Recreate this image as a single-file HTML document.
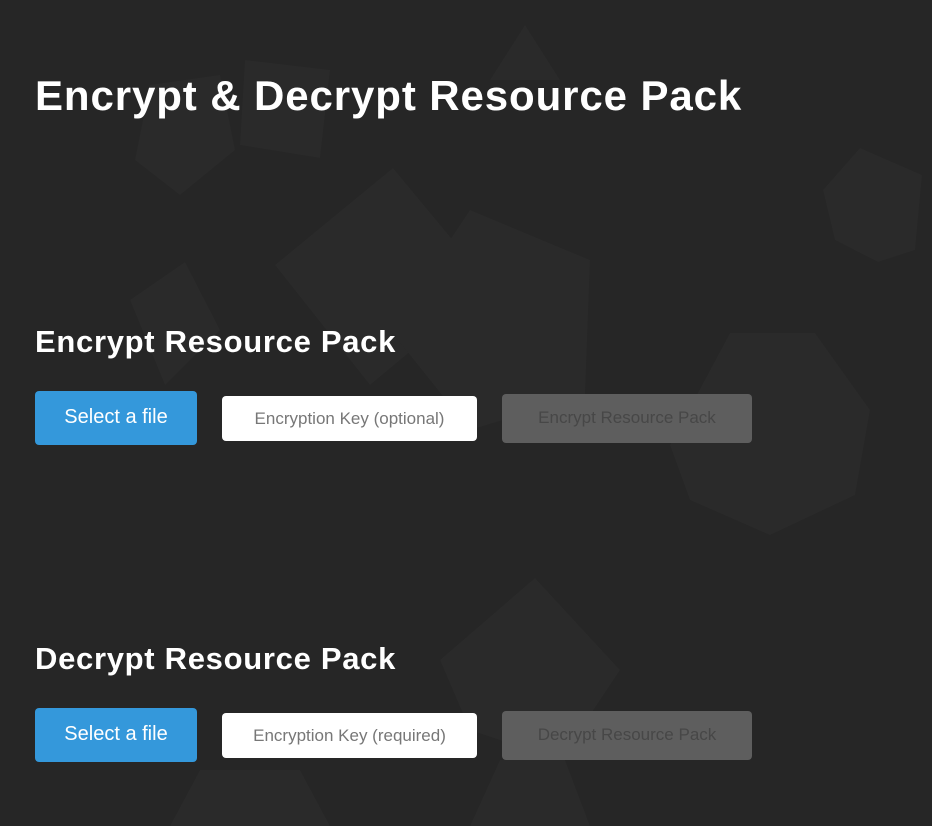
<!DOCTYPE html>
<html><head><meta charset="utf-8"><style>
html,body{margin:0;padding:0;}
body{width:932px;height:826px;background:#262626;position:relative;overflow:hidden;font-family:"Liberation Sans",sans-serif;}
svg.bg{position:absolute;left:0;top:0;}
.t{position:absolute;color:#fff;font-weight:bold;margin:0;white-space:nowrap;}
h1.t{left:35px;top:71px;font-size:42px;line-height:50px;letter-spacing:0.9px;}
h2.t{left:35px;font-size:31px;line-height:36px;letter-spacing:0.7px;}
.btn{position:absolute;left:35px;width:162px;height:54px;background:#3498db;border-radius:4px;color:#fff;font-size:20px;line-height:52px;text-align:center;}
.inp{position:absolute;left:222px;width:255px;height:45px;background:#fff;border-radius:4px;color:#777;font-size:17px;line-height:45px;text-align:center;}
.dis{position:absolute;left:502px;width:250px;height:49px;background:#5e5e5e;border-radius:4px;color:#474747;font-size:17px;line-height:48px;text-align:center;}
</style></head><body>
<svg class="bg" width="932" height="826">
<g fill="#2a2a2a">
<polygon points="525,25 560,80 490,80"/>
<polygon points="150,85 220,75 235,150 180,195 135,160"/>
<polygon points="245,60 330,70 320,158 240,145"/>
<polygon points="860,148 922,175 915,250 878,262 835,240 823,190"/>
<polygon points="393,168 490,285 370,385 275,265"/>
<polygon points="470,210 590,260 585,395 470,430 390,330"/>
<polygon points="185,262 220,330 165,385 130,300"/>
<polygon points="730,333 815,333 870,410 855,495 770,535 690,500 670,445"/>
<polygon points="535,578 620,670 560,760 470,730 440,660"/>
<polygon points="500,760 565,760 590,826 470,826"/>
<polygon points="200,770 300,770 330,826 170,826"/>
</g>
</svg>
<h1 class="t">Encrypt &amp; Decrypt Resource Pack</h1>
<h2 class="t" style="top:324px">Encrypt Resource Pack</h2>
<div class="btn" style="top:391px">Select a file</div>
<div class="inp" style="top:396px">Encryption Key (optional)</div>
<div class="dis" style="top:394px">Encrypt Resource Pack</div>
<h2 class="t" style="top:641px">Decrypt Resource Pack</h2>
<div class="btn" style="top:708px">Select a file</div>
<div class="inp" style="top:713px">Encryption Key (required)</div>
<div class="dis" style="top:711px">Decrypt Resource Pack</div>
</body></html>
